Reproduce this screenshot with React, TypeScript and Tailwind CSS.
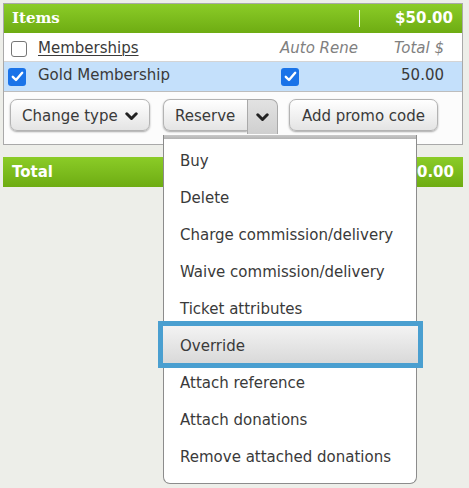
import React from "react";

const Chevron = ({ className = "" }: { className?: string }) => (
  <svg width="13" height="9" viewBox="0 0 13 9" className={className}>
    <polyline points="1.8,1.8 6.5,6.5 11.2,1.8" fill="none" stroke="#222" strokeWidth="3" strokeLinecap="round" strokeLinejoin="round" />
  </svg>
);

const CheckedBox = () => (
  <span className="flex h-[18px] w-[18px] items-center justify-center rounded-[3px] bg-[#1a73e8]">
    <svg width="13" height="11" viewBox="0 0 13 11">
      <polyline points="1.8,5.8 5,9 11.2,1.8" fill="none" stroke="#fff" strokeWidth="2.4" strokeLinecap="round" strokeLinejoin="round" />
    </svg>
  </span>
);

const items = [
  "Buy",
  "Delete",
  "Charge commission/delivery",
  "Waive commission/delivery",
  "Ticket attributes",
  "Override",
  "Attach reference",
  "Attach donations",
  "Remove attached donations",
];

export default function App() {
  return (
    <div className="relative min-h-[488px] w-[469px] bg-[#edeee9] px-[3px] pt-[3px] font-['DejaVu_Sans',sans-serif] text-[15px] text-[#3a3a3a]">
      {/* Items panel */}
      <div className="w-[460px] border border-[#a9a9a9] bg-[#fcfcfc]">
        <div className="flex h-[29px] items-center bg-gradient-to-b from-[#8bcc27] to-[#6eac12] text-white">
          <div className="flex-1 pl-[8px] font-['DejaVu_Serif',serif] text-[15px] font-bold">Items</div>
          <div className="h-[17px] w-px bg-white/90" />
          <div className="w-[102px] pr-[9px] text-right text-[15px] font-bold">$50.00</div>
        </div>
        <div className="flex h-[29px] items-center border-b border-[#d4d4d4] bg-white pt-[3px]">
          <div className="flex w-[34px] justify-start pl-[7px]">
            <span className="h-[16px] w-[16px] rounded-[3px] border-[1.5px] border-[#767676] bg-white" />
          </div>
          <div className="w-[240px] underline decoration-1 underline-offset-2">Memberships</div>
          <div className="w-[81px] overflow-hidden whitespace-nowrap pl-[2px] italic text-[#808080]">Auto Renew</div>
          <div className="w-[103px] pr-[18px] text-right italic text-[#808080]">Total $</div>
        </div>
        <div className="flex h-[30px] items-center border-b border-[#bdbdbd] bg-[#c4e0fb]">
          <div className="flex w-[34px] pl-[4px]">
            <CheckedBox />
          </div>
          <div className="w-[240px] pb-[3px]">Gold Membership</div>
          <div className="w-[81px] pl-[3px]">
            <CheckedBox />
          </div>
          <div className="w-[103px] pb-[3px] pr-[18px] text-right">50.00</div>
        </div>
        <div className="flex items-start pb-[10px] pl-[6px] pt-[7px]">
          <button className="flex h-[32px] w-[140px] items-center gap-[7px] rounded-[7px] border border-[#b3b3b3] bg-gradient-to-b from-white to-[#e4e4e4] pl-[11px] pt-[2px] shadow-[0_1px_2px_rgba(0,0,0,0.35)]">
            <span>Change type</span>
            <Chevron />
          </button>
          <div className="ml-[13px] flex h-[35px] w-[115px]">
            <button className="flex h-[32px] w-[84px] items-center rounded-l-[7px] border border-r-0 border-[#b3b3b3] bg-gradient-to-b from-white to-[#e4e4e4] pl-[11px] pt-[2px] shadow-[0_1px_2px_rgba(0,0,0,0.35)]">
              Reserve
            </button>
            <div className="relative z-20 flex h-[35px] w-[31px] items-start justify-center rounded-tr-[7px] border border-b-0 border-[#a9a9a9] bg-gradient-to-b from-[#e2e2e2] to-[#cfcfcf] pt-[13px]">
              <Chevron />
            </div>
          </div>
          <button className="ml-[11px] flex h-[32px] w-[149px] items-center justify-center rounded-[7px] border border-[#b3b3b3] bg-gradient-to-b from-white to-[#e4e4e4] pt-[2px] shadow-[0_1px_2px_rgba(0,0,0,0.35)]">
            Add promo code
          </button>
        </div>
      </div>

      {/* Total bar */}
      <div className="mt-[12px] flex h-[30px] w-[460px] items-center justify-between bg-gradient-to-b from-[#8bcc27] to-[#6eac12] px-[9px] font-bold text-white">
        <span>Total</span>
        <span>$50.00</span>
      </div>

      {/* Dropdown menu */}
      <div className="absolute left-[163px] top-[135px] z-10 w-[254px] rounded-b-[7px] border-x border-b border-[#8c8c8c] bg-white">
        <div className="h-[4px] bg-gradient-to-b from-[#c9c9c9] to-[#b3b3b3]" />
        <div className="absolute left-[-6px] top-[186px] h-[47px] w-[265px] border-[5px] border-[#4a9fd0] bg-gradient-to-b from-[#f3f3f3] to-[#d9d9d9]" />
        <div className="relative z-10 pb-[9px] pt-[2px]">
          {items.map((t) => (
            <div key={t} className="flex h-[37px] items-center whitespace-nowrap pl-[16px] pt-[4px]">
              {t}
            </div>
          ))}
        </div>
      </div>
    </div>
  );
}
